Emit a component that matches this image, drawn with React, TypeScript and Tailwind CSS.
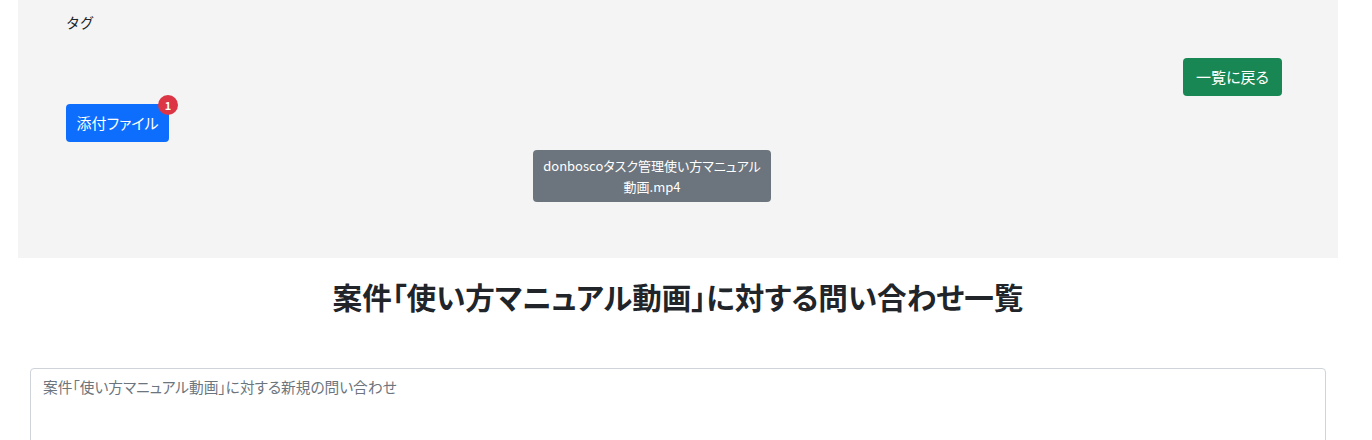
const jp = "font-['Noto_Sans_CJK_JP','Noto_Sans',sans-serif]"

export default function App() {
  return (
    <div className={`w-[1356px] bg-white pb-4 text-[#212529] ${jp}`}>
      <div className="mx-[18px] h-[258px] bg-[#f4f4f4] pl-12 pr-14 pt-[11px]">
        <div className="text-[14px] leading-[22px]">タグ</div>

        <div className="mt-[25px] flex justify-end">
          <button className="h-[38px] w-[99px] whitespace-nowrap rounded-[4px] bg-[#198754] text-[15px] text-white [font-feature-settings:'palt']">
            一覧に戻る
          </button>
        </div>

        <div className="mt-2 flex">
          <button className="relative h-[38px] w-[103px] whitespace-nowrap rounded-[4px] bg-[#0d6efd] text-[15px] text-white [font-feature-settings:'palt']">
            添付ファイル
            <span className="absolute -right-[9px] -top-[9px] flex h-5 w-5 items-center justify-center rounded-full bg-[#dc3545] text-[11px] font-bold leading-none text-white">
              1
            </span>
          </button>
        </div>

        <div className="mt-2 flex">
          <button className="ml-[467px] w-[238px] rounded-[4px] bg-[#6c757d] py-[5px] text-center text-[13px] leading-[21px] text-white [font-feature-settings:'palt']">
            donboscoタスク管理使い方マニュアル
            <br />
            動画.mp4
          </button>
        </div>
      </div>

      <h2 className="mt-[20px] text-center text-[29.6px] font-bold leading-[38px] [font-feature-settings:'palt']">
        案件「使い方マニュアル動画」に対する問い合わせ一覧
      </h2>

      <div className="mx-[30px] mt-[52px]">
        <textarea
          className="h-[100px] w-full resize-none rounded-[4px] border border-[#ced4da] px-3 py-[6px] text-[14.7px] leading-[24px] outline-none placeholder:text-[#6c757d] [font-feature-settings:'palt']"
          placeholder="案件「使い方マニュアル動画」に対する新規の問い合わせ"
        />
      </div>
    </div>
  )
}
